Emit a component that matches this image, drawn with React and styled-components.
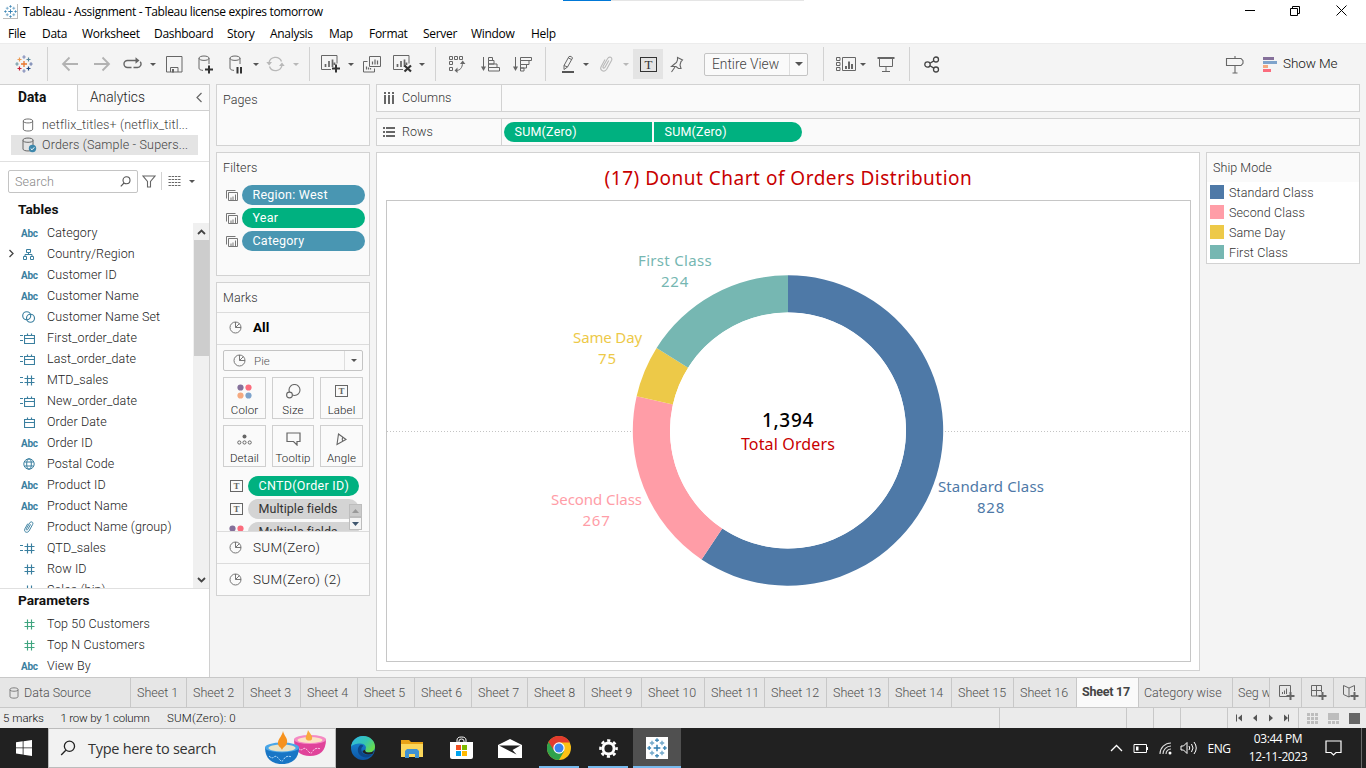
import React from "react";
import styled, { createGlobalStyle, css } from "styled-components";

const GlobalStyle = createGlobalStyle`
  * { box-sizing: border-box; }
  html, body { margin: 0; padding: 0; overflow: hidden; }
  svg { display: block; flex: none; }
`;

const UI = `Roboto, "Liberation Sans", sans-serif`;
const SYS = `"Open Sans", "Noto Sans", sans-serif`;
const VIZ = `"Noto Sans", sans-serif`;

const Screen = styled.div`
  width: 1366px;
  height: 768px;
  display: flex;
  flex-direction: column;
  background: #f4f4f4;
  font-family: ${UI};
  font-size: 12.5px;
  font-weight: 360;
  color: #222;
  white-space: nowrap;
  overflow: hidden;
`;

/* ---------- window chrome ---------- */
const TitleBar = styled.div`
  height: 23px;
  background: #fff;
  display: flex;
  align-items: center;
  padding-left: 3px;
  font: 12px ${SYS};
  letter-spacing: -0.35px;
  color: #000;
  position: relative;
`;
const TitleText = styled.span`
  margin-left: 5px;
  flex: 1;
`;
const Progress = styled.div`
  position: absolute;
  left: 563px;
  top: 0;
  width: 241px;
  height: 1px;
  background: linear-gradient(to right, #0078d7 48px, #e5e5e5 48px);
`;
const WindowButtons = styled.div`
  display: flex;
  align-items: center;
  height: 21px;
  align-self: flex-start;
`;
const WindowButton = styled.div`
  width: ${(p) => p.$w || 46}px;
  display: flex;
  justify-content: center;
`;
const MenuBar = styled.div`
  height: 20px;
  background: #fff;
  display: flex;
  align-items: center;
  padding: 2px 0 0 8px;
  font: 12px/20px ${SYS};
  letter-spacing: -0.3px;
  color: #000;
`;
const MenuItem = styled.span`
  width: ${(p) => p.$w}px;
`;
const Toolbar = styled.div`
  height: 41px;
  flex: none;
  display: flex;
  align-items: center;
  background: #f4f4f4;
  border-top: 1px solid #ececec;
`;
const Tool = styled.div`
  width: ${(p) => p.$w}px;
  height: 30px;
  flex: none;
  display: flex;
  align-items: center;
  justify-content: center;
  margin-left: ${(p) => p.$ml || 0}px;
  background: ${(p) => (p.$on ? "#e4e4e4" : "transparent")};
`;
const Spacer = styled.div`
  width: ${(p) => p.$w}px;
`;
const Divider = styled.div`
  width: 1px;
  height: ${(p) => p.$h || 34}px;
  flex: none;
  background: #d2d2d2;
  margin-left: ${(p) => p.$ml || 0}px;
`;
const Caret = styled.div`
  width: 0;
  height: 0;
  flex: none;
  border: solid transparent;
  border-width: ${(p) => p.$s || 3}px ${(p) => p.$s || 3}px 0;
  border-top-color: ${(p) => p.$c || "#555"};
  margin-left: ${(p) => p.$ml || 0}px;
`;
const Select = styled.div`
  display: flex;
  align-items: center;
  width: ${(p) => p.$w}px;
  height: ${(p) => p.$h}px;
  flex: none;
  border: 1px solid #c4c4c4;
  border-radius: 2px;
  background: #fafafa;
  color: ${(p) => p.$c || "#444"};
  font-size: ${(p) => p.$fs}px;
  letter-spacing: ${(p) => p.$ls || 0}px;
  margin-left: ${(p) => p.$ml || 0}px;
`;
const SelectLabel = styled.span`
  flex: 1;
  padding-left: 7px;
`;
const SelectArrow = styled.div`
  width: 18px;
  height: 100%;
  border-left: 1px solid #dedede;
  display: flex;
  align-items: center;
  justify-content: center;
`;
const ShowMe = styled.span`
  margin-left: 6px;
  padding-bottom: 2px;
  font-size: 13.5px;
  letter-spacing: -0.1px;
  color: #111;
`;

/* ---------- main columns ---------- */
const Main = styled.div`
  flex: 1;
  display: flex;
  min-height: 0;
`;
const SidePane = styled.div`
  width: 210px;
  background: #fff;
  border-right: 1px solid #d0d0d0;
  border-top: 1px solid #d0d0d0;
  display: flex;
  flex-direction: column;
`;
const PaneTabs = styled.div`
  display: flex;
  height: 26px;
  flex: none;
`;
const PaneTab = styled.div`
  display: flex;
  align-items: center;
  font-size: 13.8px;
  padding-bottom: 1px;
  ${(p) =>
    p.$active
      ? css`
          width: 77px;
          padding-left: 18px;
          padding-bottom: 2px;
          font-weight: 700;
          color: #111;
        `
      : css`
          flex: 1;
          padding-right: 6px;
          padding-left: 12px;
          background: #fafafa;
          border-left: 1px solid #d0d0d0;
          border-bottom: 1px solid #d0d0d0;
          justify-content: space-between;
        `}
`;
const Sources = styled.div`
  height: 51px;
  flex: none;
  padding: 4px 11px 0;
  border-bottom: 1px solid #e0e0e0;
`;
const Source = styled.div`
  height: 20px;
  display: flex;
  align-items: center;
  padding-left: 11px;
  padding-bottom: 1px;
  color: #444;
  letter-spacing: ${(p) => p.$ls}px;
  background: ${(p) => (p.$on ? "#e4e4e4" : "transparent")};
`;
const SourceIcon = styled.span`
  width: 20px;
`;
const SearchRow = styled.div`
  display: flex;
  align-items: center;
  height: 38px;
  flex: none;
  padding-left: 8px;
`;
const SearchBox = styled.div`
  width: 130px;
  height: 23px;
  border: 1px solid #c4c4c4;
  border-radius: 2px;
  padding: 0 6px;
  display: flex;
  align-items: center;
  justify-content: space-between;
  color: #888;
  letter-spacing: 0.2px;
`;
const Heading = styled.div`
  height: ${(p) => p.$h}px;
  padding-bottom: ${(p) => p.$pb || 0}px;
  flex: none;
  padding-left: 18px;
  display: flex;
  align-items: center;
  font-weight: 700;
  font-size: 13.7px;
  color: #111;
`;
const FieldArea = styled.div`
  height: 366px;
  flex: none;
  display: flex;
  border-bottom: 1px solid #e0e0e0;
`;
const FieldList = styled.div`
  flex: 1;
  overflow: hidden;
`;
const Field = styled.div`
  height: 21px;
  display: flex;
  align-items: center;
  letter-spacing: 0.12px;
  padding-left: 7px;
  padding-bottom: 2px;
`;
const FieldMark = styled.span`
  width: 10px;
`;
const FieldIcon = styled.span`
  width: 30px;
  display: flex;
  justify-content: flex-start;
  padding-left: 1px;
  padding-top: 1px;
`;
const Abc = styled.span`
  font: 700 10px ${UI};
  letter-spacing: -0.3px;
  color: #3a7f9f;
  padding: 1px 0 0 3px;
`;
const ScrollBar = styled.div`
  width: 16px;
  background: #f0f0f0;
  display: flex;
  flex-direction: column;
  align-items: center;
`;
const ScrollButton = styled.div`
  height: 17px;
  display: flex;
  align-items: center;
`;
const ScrollThumb = styled.div`
  width: 15px;
  height: 116px;
  background: #cdcdcd;
  margin-bottom: auto;
`;

/* ---------- cards column ---------- */
const Cards = styled.div`
  width: 154px;
  margin-left: 6px;
  display: flex;
  flex-direction: column;
  gap: 6px;
  color: #333;
`;
const Card = styled.div`
  height: ${(p) => p.$h}px;
  flex: none;
  border: 1px solid #d2d2d2;
  background: #fafafa;
  letter-spacing: 0.1px;
`;
const CardTitle = styled.div`
  height: ${(p) => p.$h || 29}px;
  padding: 1px 0 0 6px;
  line-height: 28px;
`;
const PillRow = styled.div`
  height: 20px;
  margin-bottom: ${(p) => p.$mb ?? 3}px;
  display: flex;
  align-items: center;
  padding-left: ${(p) => p.$pl}px;
  gap: ${(p) => p.$gap}px;
`;
const pillColors = { blue: "#4996b2", green: "#00b180", gray: "#d4d4d4" };
const Pill = styled.div`
  width: ${(p) => p.$w}px;
  height: 20px;
  flex: none;
  border-radius: ${(p) => p.$r || "10px"};
  background: ${(p) => pillColors[p.$tone]};
  color: ${(p) => (p.$tone === "gray" ? "#333" : "#fff")};
  line-height: 20px;
  padding-left: ${(p) => p.$pl || 10.5}px;
  letter-spacing: ${(p) => p.$ls ?? 0.22}px;
  font-weight: 400;
`;
const MarkRow = styled.div`
  height: 32px;
  border-top: 1px solid #dcdcdc;
  display: flex;
  align-items: center;
  gap: 11px;
  padding: 0 0 1px 12px;
  font-size: 13.5px;
  letter-spacing: 0.35px;
  color: #222;
  ${(p) =>
    p.$bold &&
    css`
      font-weight: 700;
      letter-spacing: 0;
      padding-bottom: 3px;
      color: #000;
    `}
`;
const MarkBody = styled.div`
  border-top: 1px solid #dcdcdc;
  height: 187px;
  padding: 5px 6px 0;
  position: relative;
  overflow: hidden;
`;
const MarkGrid = styled.div`
  display: grid;
  grid-template-columns: 43px 42px 43px;
  grid-template-rows: 42px 42px;
  gap: 6px;
  margin-top: 6px;
`;
const MarkButton = styled.div`
  border: 1px solid #cfcfcf;
  display: flex;
  flex-direction: column;
  align-items: center;
  justify-content: flex-end;
  font-size: 11.5px;
  line-height: 13px;
  padding-bottom: 1px;
  gap: 3px;
  color: #222;
`;
const MarkGlyph = styled.div`
  height: 20px;
  display: flex;
  align-items: center;
`;
const MarkPills = styled.div`
  padding-top: 9px;
`;
const MiniScroll = styled.div`
  position: absolute;
  right: 7px;
  bottom: 1px;
  width: 13px;
  display: flex;
  flex-direction: column;
`;
const MiniArrow = styled.div`
  height: 13px;
  border: 1px solid #bdbdbd;
  background: ${(p) => (p.$up ? "#cbcbcb" : "#f4f4f4")};
  display: flex;
  align-items: center;
  justify-content: center;
  svg { fill: ${(p) => (p.$up ? "#999" : "#3f566e")}; }
`;

/* ---------- worksheet ---------- */
const Work = styled.div`
  margin-left: 6px;
  width: 984px;
  display: flex;
  flex-direction: column;
  gap: 6px;
`;
const Shelf = styled.div`
  height: 28px;
  flex: none;
  border: 1px solid #d2d2d2;
  background: #fafafa;
  display: flex;
  align-items: center;
  color: #333;
`;
const ShelfName = styled.div`
  width: 125px;
  height: 100%;
  border-right: 1px solid #d2d2d2;
  display: flex;
  align-items: center;
  gap: 7px;
  padding: 0 0 1px 6px;
  margin-right: 2px;
  letter-spacing: 0.05px;
`;
const Lower = styled.div`
  display: flex;
  gap: 6px;
  align-items: flex-start;
`;
const View = styled.div`
  width: 824px;
  height: 519px;
  border: 1px solid #d2d2d2;
  background: #fff;
  padding: 0 8px 0 9px;
`;
const ViewTitle = styled.div`
  height: 47px;
  padding-top: 2px;
  display: flex;
  align-items: center;
  justify-content: center;
  font: 440 19px ${VIZ};
  letter-spacing: 0.5px;
  color: #c80000;
`;
const Plot = styled.div`
  height: 462px;
  border: 1px solid #c6c6c6;
`;
const Legend = styled.div`
  width: 154px;
  height: 112px;
  border: 1px solid #d2d2d2;
  background: #fff;
  color: #333;
`;
const LegendTitle = styled.div`
  height: 29px;
  line-height: 30px;
  padding-left: 6px;
  background: #fafafa;
  letter-spacing: 0.05px;
`;
const LegendItem = styled.div`
  height: 20px;
  display: flex;
  align-items: center;
  padding-left: 3px;
  gap: 5px;
  letter-spacing: 0.12px;
`;
const Swatch = styled.div`
  width: 14px;
  height: 14px;
  background: ${(p) => p.$c};
`;

/* ---------- bottom bars ---------- */
const Tabs = styled.div`
  height: 31px;
  flex: none;
  display: flex;
  background: #e6e6e6;
  border-top: 1px solid #c8c8c8;
  border-bottom: 1px solid #c8c8c8;
`;
const Tab = styled.div`
  width: ${(p) => p.$w}px;
  flex: none;
  overflow: hidden;
  border-right: 1px solid #c8c8c8;
  display: flex;
  align-items: center;
  gap: ${(p) => p.$gap || 0}px;
  padding-left: ${(p) => p.$pl ?? 6}px;
  color: #505050;
  font-size: 12.5px;
  letter-spacing: 0;
  ${(p) =>
    p.$on &&
    css`
      background: #fafafa;
      font-weight: 700;
      color: #444;
      letter-spacing: -0.25px;
      padding-left: 5px;
      padding-bottom: 2px;
    `}
`;
const StatusBar = styled.div`
  height: 20px;
  flex: none;
  display: flex;
  background: #ebebeb;
  font-size: 11.5px;
  line-height: 20px;
  color: #111;
`;
const StatusText = styled.span`
  width: ${(p) => p.$w}px;
  padding-left: ${(p) => p.$pl || 3}px;
  letter-spacing: ${(p) => p.$ls || 0}px;
`;
const StatusCell = styled.div`
  width: ${(p) => p.$w}px;
  border-left: 1px solid #c8c8c8;
  display: flex;
  align-items: center;
  padding-left: ${(p) => p.$pl || 0}px;
`;
const TaskBar = styled.div`
  height: 40px;
  flex: none;
  background: #212121;
  display: flex;
  align-items: stretch;
  color: #fff;
  font-family: ${SYS};
  font-weight: 400;
`;
const TaskSearch = styled.div`
  width: 288px;
  background: #f2f2f2;
  border: 1px solid #bcbcbc;
  display: flex;
  align-items: center;
  padding: 0 8px 0 11px;
  color: #333;
  font-size: 14.5px;
  letter-spacing: -0.28px;
  gap: 12px;
`;
const TaskLabel = styled.span`
  flex: 1;
`;
const TaskButton = styled.div`
  width: ${(p) => p.$w || 49}px;
  display: flex;
  align-items: center;
  justify-content: center;
  background: ${(p) => (p.$on ? "#505050" : "transparent")};
  position: relative;
`;
const Running = styled.i`
  position: absolute;
  bottom: 0;
  height: 2px;
  width: ${(p) => p.$w}px;
  background: #76b9ed;
`;
const Tray = styled.div`
  margin-left: auto;
  display: flex;
  align-items: center;
  font-size: 12px;
  letter-spacing: -0.5px;
`;
const TraySlot = styled.div`
  width: ${(p) => p.$w}px;
  display: flex;
  justify-content: center;
`;
const Clock = styled.div`
  width: 84px;
  text-align: center;
  line-height: 18px;
  letter-spacing: -0.42px;
`;
const DesktopEdge = styled.div`
  width: 5px;
  height: 40px;
  border-left: 1px solid #6a6a6a;
`;

/* ---------- icons ---------- */
const Ico = ({ w, h, c = "#666", sw = 1, children }) => (
  <svg width={w} height={h} viewBox={`0 0 ${w} ${h}`} fill="none" stroke={c} strokeWidth={sw}>
    {children}
  </svg>
);

const plus = (x, y, r) => `M${x - r} ${y}h${2 * r}M${x} ${y - r}v${2 * r}`;

const TableauMark = ({ size = 18, mono }) => {
  const c = mono
    ? ["#6fa6c9", "#6fa6c9", "", "#3f87b5", "#3f87b5", "#3f87b5", "#6fa6c9", "#6fa6c9", "#3f87b5"]
    : ["#eb9a53", "#5b879b", "", "#7f8ab8", "#7099a6", "#6f7fae", "#c72037", "#1f457e", "#7f8ab8"];
  return (
    <svg width={size} height={size} viewBox="0 0 18 18" fill="none" strokeWidth="1.2">
      <path d={plus(9, 9, 3)} stroke={mono ? "#2f7cb0" : "#e8762d"} strokeWidth="1.3" />
      <path d={plus(4.5, 4.5, 2)} stroke={c[0]} />
      <path d={plus(13.5, 4.5, 2)} stroke={c[1]} />
      <path d={plus(4.5, 13.5, 2)} stroke={c[6]} />
      <path d={plus(13.5, 13.5, 2)} stroke={c[7]} />
      <path d={plus(9, 2, 1.7)} stroke={c[3]} />
      <path d={plus(9, 16, 1.7)} stroke={c[8]} />
      <path d={plus(2, 9, 1.7)} stroke={c[4]} />
      <path d={plus(16, 9, 1.7)} stroke={c[5]} />
    </svg>
  );
};

const Arrow = ({ flip }) => (
  <Ico w={18} h={16} c="#b2b2b2" sw={1.8}>
    <path d={flip ? "M1 8h15M9.500 1.500L16 8l-6.500 6.500" : "M17 8H2M8.500 1.500L2 8l6.500 6.500"} />
  </Ico>
);
const Cycle = () => (
  <Ico w={19} h={14} c="#666" sw={1.4}>
    <path d="M8.500 10.500H4.500a3.500 3.500 0 0 1 0-7H14M10.500 10.500h4a3.500 3.500 0 0 0 2.700-5.700" />
    <path d="M12.500 .3l4 3.200-4 3.200z" fill="#666" stroke="none" />
  </Ico>
);
const Save = () => (
  <Ico w={17} h={17}>
    <path d="M.5 .5h15.500v15.500H.5zM4.500 16v-4.500h7.500V16" />
    <path d="M6 13h2v3.500H6z" fill="#666" stroke="none" />
  </Ico>
);
const dbPath = "M1 3.200c0-1.300 2.200-2.200 5-2.200s5 .9 5 2.200-2.200 2.200-5 2.200-5-.9-5-2.200z";
const DbAdd = () => (
  <Ico w={16} h={19} c="#666">
    <path d={dbPath} /><path d="M1 3.200v10c0 1.300 1.800 2 4 2.200M11 3.200V9" />
    <path d="M7 14.500h8M11 10.500v8" stroke="#333" strokeWidth="2" />
  </Ico>
);
const DbPause = () => (
  <Ico w={14} h={19} c="#666">
    <path d={dbPath} /><path d="M1 3.200v10c0 1.300 1.800 2 4 2.200M11 3.200V9" />
    <path d="M8.500 12v6.500M12 12v6.500" stroke="#333" strokeWidth="2" />
  </Ico>
);
const Refresh = () => (
  <Ico w={19} h={16} c="#b8b8b8" sw={1.4}>
    <path d="M3 7a6.500 6.500 0 0 1 12.500-1.500M16 9A6.500 6.500 0 0 1 3.500 10.500" />
    <path d="M.3 6l2.900 3.500L6 6zM13 10l3-3.500 2.700 3.500z" fill="#b8b8b8" stroke="none" />
  </Ico>
);
const NewSheet = ({ clear }) => (
  <Ico w={20} h={18}>
    <path d="M10 14.500H.5V.5h15.500v8" />
    <path d="M4.500 12V9M8 12V6M11.500 12V4.500M13.500 10V7.500" strokeWidth="1.700" />
    {clear ? <path d="M11.500 10.500l6.500 6M18 10.500l-6.500 6" stroke="#333" strokeWidth="2.200" /> : <path d="M11 13.500h8M15 9.500v8" stroke="#333" strokeWidth="2" />}
  </Ico>
);
const Duplicate = () => (
  <Ico w={18} h={17}>
    <path d="M6.500 .5h11v10h-11zM4.500 5.500h-4v10.500h11v-3.500" />
    <path d="M9.500 8.500V5.500M12 8.500V3.500M14.500 8.500V4.500M3.500 13.500v-3M5.500 13.500v-2M7.500 13.500v-1.500" strokeWidth="1.200" />
  </Ico>
);
const Swap = () => (
  <Ico w={18} h={18}>
    <path d="M1.500 1.500h3v3h-3zM6.500 1.500h3v3h-3zM11.500 1.500h3v3h-3zM1.500 6.500h3v3h-3zM1.500 12.500h3v3h-3zM8 15.500c4 0 6.500-2.500 6.500-8" />
    <path d="M12 9l2.700-3.500L17.400 9zM9.500 12.500L6.500 15.500l3 2.500z" fill="#666" stroke="none" />
  </Ico>
);
const Sort = ({ desc }) => (
  <Ico w={19} h={16}>
    <path d="M2.500 1v11" />
    <path d="M0 10.500h5L2.500 15z" fill="#666" stroke="none" />
    <path d={desc ? "M7.500 1.500h11v3h-11zM7.500 4.500h8.500v4H7.500zM7.500 8.500h6v3.500h-6zM7.500 12h3.500v3H7.500z" : "M7.500 1.500h4v3h-4zM7.500 4.500h5.500v3.500H7.500zM7.500 8h8.500v3.500H7.500zM7.500 11.500h11v3.500h-11z"} />
  </Ico>
);
const Pen = () => (
  <Ico w={14} h={19}>
    <path d="M3 10.500L8 1.500q2.500-1 3.500 1.500L6.500 12l-3.500 2.500zM3 10.500l3.500 1.500M7.500 3l3 1.500" />
    <path d="M1 17h12" stroke="#555" strokeWidth="2" />
  </Ico>
);
const Clip = ({ c = "#b8b8b8", w = 14, h = 16 }) => (
  <svg width={w} height={h} viewBox="0 0 14 16" fill="none" stroke={c} strokeWidth={w < 14 ? 1.3 : 1.1}>
    <path d="M9.800 4.500L6 11.300c-.9 1.500-2.600.5-1.800-1l4.300-7.600c1.800-3 5.500-1.200 4 1.900L7.700 13.300c-2.400 3.600-7.500 1.200-5.500-2.900L6 3.500" />
  </svg>
);
const LabelT = ({ w = 17, h = 15, c = "#666", fs = 12 }) => (
  <svg width={w} height={h} viewBox={`0 0 ${w} ${h}`}>
    <rect x=".5" y=".5" width={w - 1} height={h - 1} fill="none" stroke={c} />
    <text x={w / 2} y={h / 2 + fs * 0.33} textAnchor="middle" fontFamily="Liberation Serif, serif" fontWeight={fs > 10 ? 400 : 700} fontSize={fs} fill={c}>T</text>
  </svg>
);
const Pin = () => (
  <Ico w={14} h={17}>
    <path d="M7.500 1.500l5 2.500-1.500 1.500-1 3.500 1 3.500h-2.500L6 10.500H1.500L4.500 8 6.500 6.500 7.500 4zM5 11L1.500 16" strokeWidth="1.100" />
  </Ico>
);
const CardsIcon = () => (
  <Ico w={21} h={16}>
    <path d="M.5 1.500h3.500v3H.5zM.5 6.500h3.500v3H.5zM.5 11.500h3.500v3H.5zM6.500 1.500h13v13h-13z" />
    <path d="M10 13V10M13 13V5.500M16 13V8" strokeWidth="2" />
  </Ico>
);
const Present = () => (
  <Ico w={18} h={17}>
    <path d="M.5 2h17" strokeWidth="2" />
    <path d="M2.500 2v8.500h13V2M9 10.500v5M5 15.500h8" />
  </Ico>
);
const Share = () => (
  <Ico w={16} h={17} c="#444" sw={1.3}>
    <circle cx="3.500" cy="8.500" r="2.700" /><circle cx="12" cy="3.500" r="2.500" /><circle cx="12" cy="13.500" r="2.500" />
    <path d="M6 7.200l3.800-2.300M6 9.800l3.800 2.300" />
  </Ico>
);
const Sign = () => (
  <Ico w={20} h={19}>
    <path d="M1.500 3.500H16l2 2.200v2.600L16 10.500H1.500zM10 1v2.500M10 10.500V18M7.500 18h5" strokeWidth="1.100" />
  </Ico>
);
const ShowMeIcon = () => (
  <svg width="14" height="15" viewBox="0 0 14 15">
    <path d="M0 0h11v3H0z" fill="#85709a" /><path d="M0 4h14v3H0z" fill="#7ea3cb" />
    <path d="M0 8h5v3H0z" fill="#f5a97f" /><path d="M0 12h8v3H0z" fill="#fb6c7d" />
  </svg>
);
const Db = ({ on, s = 14, w = 12 }) => (
  <svg width={on ? 15 : w} height={s} viewBox={on ? "0 0 15 16" : "0 0 12 15"} fill="none" stroke="#666">
    <path d="M1 3c0-2.600 10-2.600 10 0v9c0 2.600-10 2.600-10 0zM1 3.500c0 2.400 10 2.400 10 0" />
    {on && <><circle cx="10.500" cy="11.500" r="3.700" fill="#3d87ab" stroke="none" /><path d="M8.700 11.500l1.300 1.300 2.300-2.500" stroke="#fff" /></>}
  </svg>
);
const Lens = ({ s = 11, c = "#555", sw = 1.1 }) => (
  <svg width={s} height={s} viewBox="0 0 11 11" fill="none" stroke={c} strokeWidth={sw}>
    <circle cx="6.500" cy="4.300" r="3.500" /><path d="M4 7L.8 10.300" />
  </svg>
);
const B = "#3a7f9f";
const Hash = ({ c = B }) => (
  <Ico w={11} h={11} c={c} sw={1.15}><path d="M.5 3.500h10M.5 7.500h10M3.500 .5v10M7.500 .5v10" /></Ico>
);
const Cal = () => (
  <Ico w={11} h={11} c={B} sw={1.15}><path d="M.5 2.500h10v8H.5zM.5 5.500h10M3.500 .5v2M7.500 .5v2" /></Ico>
);
const Calc = styled.span`
  display: flex;
  align-items: center;
  gap: 1px;
  margin-left: ${(p) => (p.$eq ? 2 : p.$ml ?? 5)}px;
  &::before {
    content: "";
    display: ${(p) => (p.$eq ? "block" : "none")};
    width: 3px;
    height: 4px;
    border: solid ${B};
    border-width: 1px 0;
  }
`;
const fieldIcons = {
  abc: <Abc>Abc</Abc>,
  hier: <Calc><Ico w={11} h={11} c={B}><path d="M3.500 .5h4v3h-4zM.5 7.500h3v3h-3zM7.500 7.500h3v3h-3zM5.500 3.500v2M2 7.500v-2h7v2" /></Ico></Calc>,
  set: <Calc $ml={4}><Ico w={14} h={12} c={B} sw={1.15}><circle cx="4.700" cy="4.700" r="4" /><circle cx="8.500" cy="7.200" r="4" /></Ico></Calc>,
  ecal: <Calc $eq><Cal /></Calc>,
  ehash: <Calc $eq><Hash /></Calc>,
  cal: <Calc $ml={6}><Cal /></Calc>,
  hash: <Calc $ml={6}><Hash /></Calc>,
  ghash: <Calc $ml={6}><Hash c="#3fa47f" /></Calc>,
  globe: <Calc $ml={5}><Ico w={12} h={12} c={B}><circle cx="6" cy="6" r="5.200" /><ellipse cx="6" cy="6" rx="2.300" ry="5.200" /><path d="M1.500 4h9M1.500 8h9" /></Ico></Calc>,
  clip: <Calc $ml={5}><Clip c={B} w={11} h={12} /></Calc>,
};
const Pie = () => (
  <Ico w={13} h={13} c="#777">
    <circle cx="6.500" cy="6.500" r="5.500" />
    <path d="M6.500 1v5.500H12M6.500 6.500l4-4" />
  </Ico>
);
const Context = () => (
  <Ico w={12} h={11} c="#777">
    <path d="M.5 8.500V.5H9.500M2.500 10.500v-8h9v8zM5 10V7.500M7 10V6.500M9.500 10V4.500" />
  </Ico>
);
const Dots = () => (
  <svg width="15" height="15" viewBox="0 0 15 15">
    <circle cx="3.500" cy="3.500" r="3.100" fill="#85709a" /><circle cx="11.500" cy="3.500" r="3.100" fill="#fb6c7d" />
    <circle cx="3.500" cy="11.500" r="3.100" fill="#f5a97f" /><circle cx="11.500" cy="11.500" r="3.100" fill="#7ea3cb" />
  </svg>
);
const markButtons = [
  ["Color", <Dots />],
  ["Size", <Ico w={15} h={15} sw={1.1}><circle cx="8.500" cy="6" r="5.500" /><circle cx="3.500" cy="11" r="2.900" fill="#fafafa" /></Ico>],
  ["Label", <LabelT w={13} h={12} fs={9} />],
  ["Detail", <Ico w={15} h={11}><circle cx="7.500" cy="2.500" r="2" fill="#666" stroke="none" /><circle cx="2.300" cy="8.500" r="1.600" /><circle cx="7.500" cy="8.500" r="1.600" /><circle cx="12.700" cy="8.500" r="1.600" /></Ico>],
  ["Tooltip", <Ico w={15} h={14} sw={1.2}><path d="M1 1h13v8.500h-3V13L7.500 9.500H1z" /></Ico>],
  ["Angle", <Ico w={11} h={13} sw={1.1}><path d="M2.500 1L10 6.500 1 11.500zM7 4Q5.500 6.500 7 8" /></Ico>],
];
const ColumnsIcon = () => (
  <svg width="12" height="12" viewBox="0 0 12 12" fill="#666"><path d="M1 0h2v2H1zM5 0h2v2H5zM9 0h2v2H9zM1 3h2v9H1zM5 3h2v9H5zM9 3h2v9H9z" /></svg>
);
const RowsIcon = () => (
  <svg width="12" height="12" viewBox="0 0 12 12" fill="#666"><path d="M0 1h2v2H0zM0 5h2v2H0zM0 9h2v2H0zM3 1h9v2H3zM3 5h9v2H3zM3 9h9v2H3z" /></svg>
);

/* ---------- chart ---------- */
const slices = [
  { name: "Standard Class", value: 828, color: "#4e79a7", x: 604, y: 286, ls: 0.15 },
  { name: "Second Class", value: 267, color: "#ff9da7", x: 209.5, y: 299, ls: -0.05 },
  { name: "Same Day", value: 75, color: "#edc948", x: 220.5, y: 137, ls: -0.15 },
  { name: "First Class", value: 224, color: "#76b7b2", x: 288, y: 60, ls: 0.3 },
];
const ChartText = styled.text`
  font: ${(p) => p.$fw || 400} ${(p) => p.$fs || 15}px ${VIZ};
  letter-spacing: ${(p) => p.$ls ?? 0.1}px;
  text-anchor: middle;
`;
const Donut = () => {
  const cx = 401, cy = 229.5, R = 155.2, r = 118;
  const total = slices.reduce((s, d) => s + d.value, 0);
  let a = 0;
  const pt = (rad, t) => `${cx + rad * Math.sin(t)} ${cy - rad * Math.cos(t)}`;
  return (
    <svg width="803" height="460" viewBox="0 0 803 460">
      <path d="M0 230.500H803" stroke="#c4c4c4" strokeDasharray="1 2" />
      {slices.map((s) => {
        const b = a + (s.value / total) * 2 * Math.PI;
        const big = b - a > Math.PI ? 1 : 0;
        const d = `M${pt(R, a)}A${R} ${R} 0 ${big} 1 ${pt(R, b)}L${pt(r, b)}A${r} ${r} 0 ${big} 0 ${pt(r, a)}Z`;
        a = b;
        return <path key={s.name} d={d} fill={s.color} />;
      })}
      <circle cx={cx} cy={cy} r={r} fill="#fff" />
      {slices.map((s) => (
        <g key={s.name} fill={s.color}>
          <ChartText x={s.x} y={s.y + 5} $ls={s.ls}>{s.name}</ChartText>
          <ChartText x={s.x} y={s.y + 26} $ls={0.8}>{s.value}</ChartText>
        </g>
      ))}
      <ChartText x={cx} y="226" $fs={19} $fw={460} $ls={0.7} fill="#000">1,394</ChartText>
      <ChartText x={cx} y="249" $fs={16} $ls={0.15} fill="#c80000">Total Orders</ChartText>
    </svg>
  );
};

/* ---------- taskbar art ---------- */
const Diyas = () => (
  <svg width="62" height="36" viewBox="0 0 62 36">
    <path d="M29 9c0 12 6 17 16 17s16-5 16-17z" fill="#e0439a" />
    <ellipse cx="45" cy="9.500" rx="16" ry="4.500" fill="#f58ac4" /><ellipse cx="45" cy="10" rx="12.500" ry="3" fill="#fbe3c4" />
    <path d="M33 18q3 3 5 1t5 2 5 0 8-2" stroke="#ffd6ee" fill="none" strokeDasharray="2 1" />
    <path d="M43 0c1 3 5 5 4 9-.5 2-5 2-6 0s1-4 2-9z" fill="#f9a93c" />
    <path d="M0 17c0 12 7 17 17 17s17-5 17-17z" fill="#1976c5" />
    <ellipse cx="17" cy="17.500" rx="17" ry="5" fill="#49a6e8" /><ellipse cx="17" cy="18" rx="13.500" ry="3.500" fill="#e9e3c8" />
    <path d="M4 26q3 3 5 1t5 2 5 0 8-2" stroke="#bfe3ff" fill="none" strokeDasharray="2 1" />
    <path d="M18 1c1 5 5 7 4 12-.5 3-4 4-5 7-1-3-5-4-4-8s4-6 5-11z" fill="#f6921e" />
  </svg>
);
const Edge = () => (
  <svg width="24" height="24" viewBox="0 0 24 24">
    <defs>
      <linearGradient id="eg" x1="0" y1="0" x2="1" y2=".6"><stop offset="0" stopColor="#2fb6ea" /><stop offset=".6" stopColor="#36c6b0" /><stop offset="1" stopColor="#67dc4c" /></linearGradient>
      <linearGradient id="eb" x1="0" y1="0" x2="0" y2="1"><stop offset="0" stopColor="#1b8fdc" /><stop offset="1" stopColor="#0c55a5" /></linearGradient>
    </defs>
    <circle cx="12" cy="12" r="12" fill="url(#eb)" />
    <path d="M0 11C1 4 6 0 12 0c7 0 12 5 12 10.500 0 4-3 6-6 6-3.500 0-4.500-1.500-3.500-3C16 11 14 7.500 9.500 7.500 5 7.500 1 9 0 11z" fill="url(#eg)" />
    <path d="M9 9c-3 3-3 8 1 11 4 2.500 9 1.500 12-2-3 1.500-10 1.500-11.500-3-.8-2.500.5-4.500 2-5C11.500 8.500 10 8.500 9 9z" fill="#0d4688" />
    <path d="M14.500 13.500c-1 1.500 0 3 3.500 3 2 0 4-.8 5-2.200l-1 3.200c-4 2-10 1-10.500-2.500z" fill="#212121" />
  </svg>
);
const Explorer = () => (
  <svg width="22" height="19" viewBox="0 0 22 19">
    <path d="M0 1h8l2 2h12v15H0z" fill="#e8a317" /><path d="M0 5h22v13H0z" fill="#fbd75b" />
    <path d="M4 19v-7l2-2h10l2 2v7h-4v-4H8v4z" fill="#3f92d2" />
  </svg>
);
const Store = () => (
  <svg width="23" height="24" viewBox="0 0 23 24">
    <path d="M7 7V4q0-3 4.500-3T16 4v3M9 7V5q0-2 2.500-2T14 5v2" stroke="#fff" fill="none" />
    <path d="M0 6h23v15q0 2-2 2H2q-2 0-2-2z" fill="#fff" />
    <path d="M6 9h5v5H6z" fill="#f25022" /><path d="M12 9h5v5h-5z" fill="#7fba00" /><path d="M6 15h5v5H6z" fill="#00a4ef" /><path d="M12 15h5v5h-5z" fill="#ffb900" />
  </svg>
);
const Mail = () => (
  <svg width="24" height="19" viewBox="0 0 24 19"><path d="M0 6L12 0l12 6v13H0z" fill="#fff" /><path d="M1 6.500l21.500 0L14.500 11l4 4.500z" fill="#212121" /></svg>
);
const Chrome = () => (
  <svg width="24" height="24" viewBox="0 0 24 24">
    <circle cx="12" cy="12" r="12" fill="#fbc116" />
    <path d="M12 12L1.600 6A12 12 0 0 0 12 24l5.200-9z" fill="#2fa24c" />
    <path d="M12 6.500h10.700A12 12 0 0 0 1.600 6l5.500 8.800z" fill="#e33b2e" />
    <circle cx="12" cy="12" r="5.700" fill="#fff" /><circle cx="12" cy="12" r="4.500" fill="#3b82f0" />
  </svg>
);
const Gear = () => (
  <svg width="19" height="19" viewBox="0 0 19 19" fill="none" stroke="#fff">
    <circle cx="9.500" cy="9.500" r="5.500" strokeWidth="2.800" />
    <circle cx="9.500" cy="9.500" r="8" strokeWidth="2.600" strokeDasharray="3.140 3.143" strokeDashoffset="1.570" />
  </svg>
);
const Plate = styled.div`
  width: 22px;
  height: 22px;
  background: #fff;
  display: flex;
  align-items: center;
  justify-content: center;
`;
const SmallPlate = styled(Plate)`
  width: 15px;
  height: 15px;
  border: solid #bbb;
  border-width: 0 1px 1px 0;
`;

const menu = [["File", 34], ["Data", 40], ["Worksheet", 72], ["Dashboard", 73], ["Story", 43], ["Analysis", 59], ["Map", 40], ["Format", 54], ["Server", 48], ["Window", 60], ["Help", 40]];
const fields = [["abc", "Category"], ["hier", "Country/Region"], ["abc", "Customer ID"], ["abc", "Customer Name"], ["set", "Customer Name Set"], ["ecal", "First_order_date"], ["ecal", "Last_order_date"], ["ehash", "MTD_sales"], ["ecal", "New_order_date"], ["cal", "Order Date"], ["abc", "Order ID"], ["globe", "Postal Code"], ["abc", "Product ID"], ["abc", "Product Name"], ["clip", "Product Name (group)"], ["ehash", "QTD_sales"], ["hash", "Row ID"], ["hash", "Sales (bin)"]];
const params = [["ghash", "Top 50 Customers"], ["ghash", "Top N Customers"], ["abc", "View By"]];
const filters = [["Region: West", "blue"], ["Year", "green"], ["Category", "blue"]];
const tabWidths = [56, 57, 57, 57, 57, 57, 56, 57, 57, 63, 60, 62, 62, 63, 62, 63];

const FieldItem = ({ icon, name }) => (
  <Field>
    <FieldMark>
      {icon === "hier" && <Ico w={7} h={9} c="#444" sw={1.3}><path d="M2.500 1L6 4.500 2.500 8" /></Ico>}
    </FieldMark>
    <FieldIcon>{fieldIcons[icon]}</FieldIcon>
    {name}
  </Field>
);

export default function App() {
  return (
    <Screen>
      <GlobalStyle />
      <TitleBar>
        <Progress />
        <SmallPlate><TableauMark size={13} mono /></SmallPlate>
        <TitleText>Tableau - Assignment - Tableau license expires tomorrow</TitleText>
        <WindowButtons>
          <WindowButton $w={44}><Ico w={10} h={1} c="#000"><path d="M0 .5h10" /></Ico></WindowButton>
          <WindowButton><Ico w={10} h={10} c="#000"><path d="M.5 2.500h7v7h-7zM2.500 2.500v-2h7v7h-2" /></Ico></WindowButton>
          <WindowButton><Ico w={11} h={11} c="#000"><path d="M.5 .5l10 10M10.500 .5l-10 10" /></Ico></WindowButton>
        </WindowButtons>
        <Spacer $w={2} />
      </TitleBar>
      <MenuBar>{menu.map(([m, w]) => <MenuItem key={m} $w={w}>{m}</MenuItem>)}</MenuBar>
      <Toolbar>
        <Tool $w={47}><TableauMark /></Tool>
        <Divider />
        <Tool $w={18} $ml={13}><Arrow /></Tool>
        <Tool $w={18} $ml={14}><Arrow flip /></Tool>
        <Tool $w={20} $ml={11}><Cycle /></Tool>
        <Caret $ml={8} />
        <Tool $w={17} $ml={10}><Save /></Tool>
        <Tool $w={16} $ml={15}><DbAdd /></Tool>
        <Tool $w={14} $ml={15}><DbPause /></Tool>
        <Caret $ml={10} />
        <Tool $w={19} $ml={7}><Refresh /></Tool>
        <Caret $ml={8} $c="#b8b8b8" />
        <Divider $ml={10} />
        <Tool $w={20} $ml={11}><NewSheet /></Tool>
        <Caret $ml={7} />
        <Tool $w={18} $ml={9}><Duplicate /></Tool>
        <Tool $w={20} $ml={12}><NewSheet clear /></Tool>
        <Caret $ml={6} />
        <Divider $ml={10} />
        <Tool $w={18} $ml={12}><Swap /></Tool>
        <Tool $w={19} $ml={15}><Sort /></Tool>
        <Tool $w={19} $ml={13}><Sort desc /></Tool>
        <Divider $ml={13} />
        <Tool $w={14} $ml={15}><Pen /></Tool>
        <Caret $ml={8} />
        <Tool $w={14} $ml={10}><Clip /></Tool>
        <Caret $ml={10} $c="#b8b8b8" />
        <Tool $w={30} $ml={4} $on><LabelT c="#333" fs={13} /></Tool>
        <Tool $w={14} $ml={7}><Pin /></Tool>
        <Select $w={104} $h={23} $fs={13.8} $ls={0} $ml={20}>
          <SelectLabel>Entire View</SelectLabel>
          <SelectArrow><Caret $s={4} /></SelectArrow>
        </Select>
        <Divider $ml={15} />
        <Tool $w={21} $ml={12}><CardsIcon /></Tool>
        <Caret $ml={3} />
        <Tool $w={18} $ml={11}><Present /></Tool>
        <Divider $ml={14} />
        <Tool $w={16} $ml={14}><Share /></Tool>
        <Tool $w={20} $ml={285}><Sign /></Tool>
        <Tool $w={14} $ml={18}><ShowMeIcon /></Tool>
        <ShowMe>Show Me</ShowMe>
      </Toolbar>

      <Main>
        <SidePane>
          <PaneTabs>
            <PaneTab $active>Data</PaneTab>
            <PaneTab>Analytics<Ico w={8} h={11} c="#666" sw={1.2}><path d="M6.500 1L2 5.500 6.500 10" /></Ico></PaneTab>
          </PaneTabs>
          <Sources>
            <Source $ls={0.18}><SourceIcon><Db /></SourceIcon>netflix_titles+ (netflix_titl...</Source>
            <Source $ls={0.17} $on><SourceIcon><Db on s={16} /></SourceIcon>Orders (Sample - Supers...</Source>
          </Sources>
          <SearchRow>
            <SearchBox>Search<Lens /></SearchBox>
            <Tool $w={22}><Ico w={14} h={13}><path d="M1 1h12L8.500 6.500V12h-3V6.500z" strokeWidth="1.100" /></Ico></Tool>
            <Divider $h={18} $ml={1} />
            <Tool $w={24}><Ico w={13} h={10}><path d="M.5 .5h12M.5 3.500h12M.5 6.500h12M.5 9.500h12" strokeDasharray="2.400 .8" /></Ico></Tool>
            <Caret $s={3.5} $ml={3} />
          </SearchRow>
          <Heading $h={23} $pb={6}>Tables</Heading>
          <FieldArea>
            <FieldList>{fields.map(([i, n]) => <FieldItem key={n} icon={i} name={n} />)}</FieldList>
            <ScrollBar>
              <ScrollButton><Ico w={9} h={6} c="#444" sw={1.8}><path d="M1 5l3.500-3.500L8 5" /></Ico></ScrollButton>
              <ScrollThumb />
              <ScrollButton><Ico w={9} h={6} c="#444" sw={1.8}><path d="M1 1l3.500 3.500L8 1" /></Ico></ScrollButton>
            </ScrollBar>
          </FieldArea>
          <Heading $h={25} $pb={4}>Parameters</Heading>
          {params.map(([i, n]) => <FieldItem key={n} icon={i} name={n} />)}
        </SidePane>

        <Cards>
          <Card $h={62}><CardTitle>Pages</CardTitle></Card>
          <Card $h={124}>
            <CardTitle $h={32}>Filters</CardTitle>
            {filters.map(([n, t]) => (
              <PillRow key={n} $pl={9} $gap={4}><Context /><Pill $w={123} $tone={t}>{n}</Pill></PillRow>
            ))}
          </Card>
          <Card $h={314}>
            <CardTitle>Marks</CardTitle>
            <MarkRow $bold><Pie />All</MarkRow>
            <MarkBody>
              <Select $w={140} $h={21} $fs={11.5} $ls={0.1} $c="#555">
                <Tool $w={15} $ml={8}><Pie /></Tool>
                <SelectLabel>Pie</SelectLabel>
                <SelectArrow><Caret $s={3.5} /></SelectArrow>
              </Select>
              <MarkGrid>
                {markButtons.map(([n, g]) => <MarkButton key={n}><MarkGlyph>{g}</MarkGlyph>{n}</MarkButton>)}
              </MarkGrid>
              <MarkPills>
                <PillRow $pl={7} $gap={5}><LabelT w={13} h={12} fs={9} /><Pill $w={111} $tone="green" $ls={0.3}>CNTD(Order ID)</Pill></PillRow>
                <PillRow $pl={7} $gap={5}><LabelT w={13} h={12} fs={9} /><Pill $w={111} $tone="gray" $ls={0.05}>Multiple fields</Pill></PillRow>
                <PillRow $pl={6} $gap={4}><Dots /><Pill $w={111} $tone="gray" $ls={0.05}>Multiple fields</Pill></PillRow>
              </MarkPills>
              <MiniScroll>
                <MiniArrow $up><svg width="7" height="4"><path d="M0 4L3.500 0 7 4z" /></svg></MiniArrow>
                <MiniArrow><svg width="7" height="4"><path d="M0 0L3.500 4 7 0z" /></svg></MiniArrow>
              </MiniScroll>
            </MarkBody>
            <MarkRow><Pie />SUM(Zero)</MarkRow>
            <MarkRow><Pie />SUM(Zero) (2)</MarkRow>
          </Card>
        </Cards>

        <Work>
          <Shelf><ShelfName><ColumnsIcon />Columns</ShelfName></Shelf>
          <Shelf>
            <ShelfName><RowsIcon />Rows</ShelfName>
            <PillRow $pl={0} $gap={2} $mb={0}>
              <Pill $w={148} $tone="green" $r="10px 0 0 10px">SUM(Zero)</Pill>
              <Pill $w={148} $tone="green" $r="0 10px 10px 0">SUM(Zero)</Pill>
            </PillRow>
          </Shelf>
          <Lower>
            <View>
              <ViewTitle>(17) Donut Chart of Orders Distribution</ViewTitle>
              <Plot><Donut /></Plot>
            </View>
            <Legend>
              <LegendTitle>Ship Mode</LegendTitle>
              {slices.map((s) => <LegendItem key={s.name}><Swatch $c={s.color} />{s.name}</LegendItem>)}
            </Legend>
          </Lower>
        </Work>
      </Main>

      <Tabs>
        <Tab $w={131} $pl={9} $gap={5}><Db s={12} w={10} />Data Source</Tab>
        {tabWidths.map((w, i) => <Tab key={i} $w={w}>Sheet {i + 1}</Tab>)}
        <Tab $w={62} $on>Sheet 17</Tab>
        <Tab $w={94} $pl={5}>Category wise</Tab>
        <Tab $w={37} $pl={5}>Seg wise</Tab>
        <Tab $w={32} $pl={9}><Ico w={16} h={15}><path d="M8 11.500H.5v-11h11V7M3.500 9V7M5.500 9V5.500M7.500 9V3.500" /><path d="M7.500 11h8M11.500 7v8" strokeWidth="2" /></Ico></Tab>
        <Tab $w={32} $pl={9}><Ico w={16} h={15}><path d="M8 11H.5V.5h10V7M.5 5.500h10M5.500 .5V11" /><path d="M7.500 11h8M11.500 7v8" strokeWidth="2" /></Ico></Tab>
        <Tab $w={32} $pl={9}><Ico w={16} h={15}><path d="M6 3L.5 .5v9L6 12V3L11.500 .5V6M6 12l1.500-1" /><path d="M7.500 11h8M11.500 7v8" strokeWidth="2" /></Ico></Tab>
      </Tabs>
      <StatusBar>
        <StatusText $w={58}>5 marks</StatusText>
        <StatusText $w={106} $pl={2.5} $ls={-0.2}>1 row by 1 column</StatusText>
        <StatusText $w={835} $ls={0.22}>SUM(Zero): 0</StatusText>
        <StatusCell $w={127} /><StatusCell $w={27} /><StatusCell $w={27} /><StatusCell $w={47} />
        <StatusCell $w={71} $pl={8}>
          <svg width="56" height="8" viewBox="0 0 56 8" fill="#555">
            <path d="M0 .5h1v7H0zM6 .5v7L2 4zM21 .5v7L17 4zM33 .5v7L37 4zM48 .5v7l4-3.500zM52 .5h1v7h-1z" />
          </svg>
        </StatusCell>
        <StatusCell $w={68} $pl={8}>
          <svg width="54" height="11" viewBox="0 0 54 11" fill="#bdbdbd">
            <path d="M0 0h3v3H0zM4 0h3v3H4zM8 0h3v3H8zM0 4h3v3H0zM4 4h3v3H4zM8 4h3v3H8zM0 8h3v3H0zM4 8h3v3H4zM8 8h3v3H8zM21 0h11v7H21zM21 8h3v3h-3zM25 8h3v3h-3zM29 8h3v3h-3z" />
            <path d="M42 0h11v11H42z" fill="#666" />
          </svg>
        </StatusCell>
      </StatusBar>

      <TaskBar>
        <TaskButton $w={48}><svg width="16" height="16" viewBox="0 0 16 16" fill="#fff"><path d="M0 2.200L6.700 1.300v6.200H0zM7.500 1.200L16 0v7.500H7.500zM0 8.300h6.700v6.200L0 13.600zM7.500 8.300H16V16l-8.500-1.200z" /></svg></TaskButton>
        <TaskSearch><Lens s={16} c="#222" sw={0.9} /><TaskLabel>Type here to search</TaskLabel><Diyas /></TaskSearch>
        <TaskButton $w={54}><Edge /></TaskButton>
        <TaskButton $w={44}><Explorer /></TaskButton>
        <TaskButton $w={54}><Store /></TaskButton>
        <TaskButton $w={44}><Mail /></TaskButton>
        <TaskButton $w={54}><Chrome /><Running $w={40} /></TaskButton>
        <TaskButton $w={44}><Gear /><Running $w={40} /></TaskButton>
        <Spacer $w={3} />
        <TaskButton $w={48} $on><Plate><TableauMark size={20} mono /></Plate><Running $w={48} /></TaskButton>
        <Tray>
          <TraySlot $w={22}><Ico w={13} h={8} c="#fff" sw={1.3}><path d="M1 7l5.500-5.500L12 7" /></Ico></TraySlot>
          <TraySlot $w={28}><Ico w={16} h={9} c="#fff"><path d="M1 .5h12.500v8H1zM14.500 3v3" /><path d="M3 2.500h2.500v4H3z" fill="#fff" stroke="none" /></Ico></TraySlot>
          <TraySlot $w={21}><Ico w={13} h={13} c="#ddd" sw={1.1}><path d="M1 12A11 11 0 0 1 12 1M4 12a8 8 0 0 1 8-8M7 12a5 5 0 0 1 5-5" /><circle cx="11" cy="11" r="1.500" fill="#fff" stroke="none" /></Ico></TraySlot>
          <TraySlot $w={26}><Ico w={18} h={14} c="#fff"><path d="M1 5h2.500L7 1.500v11L3.500 9H1zM9 5q1.500 2 0 4M11.500 3q3 4 0 8M14 1q4.500 6 0 12" /></Ico></TraySlot>
          <TraySlot $w={34}>ENG</TraySlot>
          <Clock>03:44 PM<br />12-11-2023</Clock>
          <TraySlot $w={27}><Ico w={17} h={16} c="#fff" sw={1.2}><path d="M1 1h15v11.500h-5L8.500 15 6 12.500H1z" /></Ico></TraySlot>
          <Spacer $w={14} />
          <DesktopEdge />
        </Tray>
      </TaskBar>
    </Screen>
  );
}
